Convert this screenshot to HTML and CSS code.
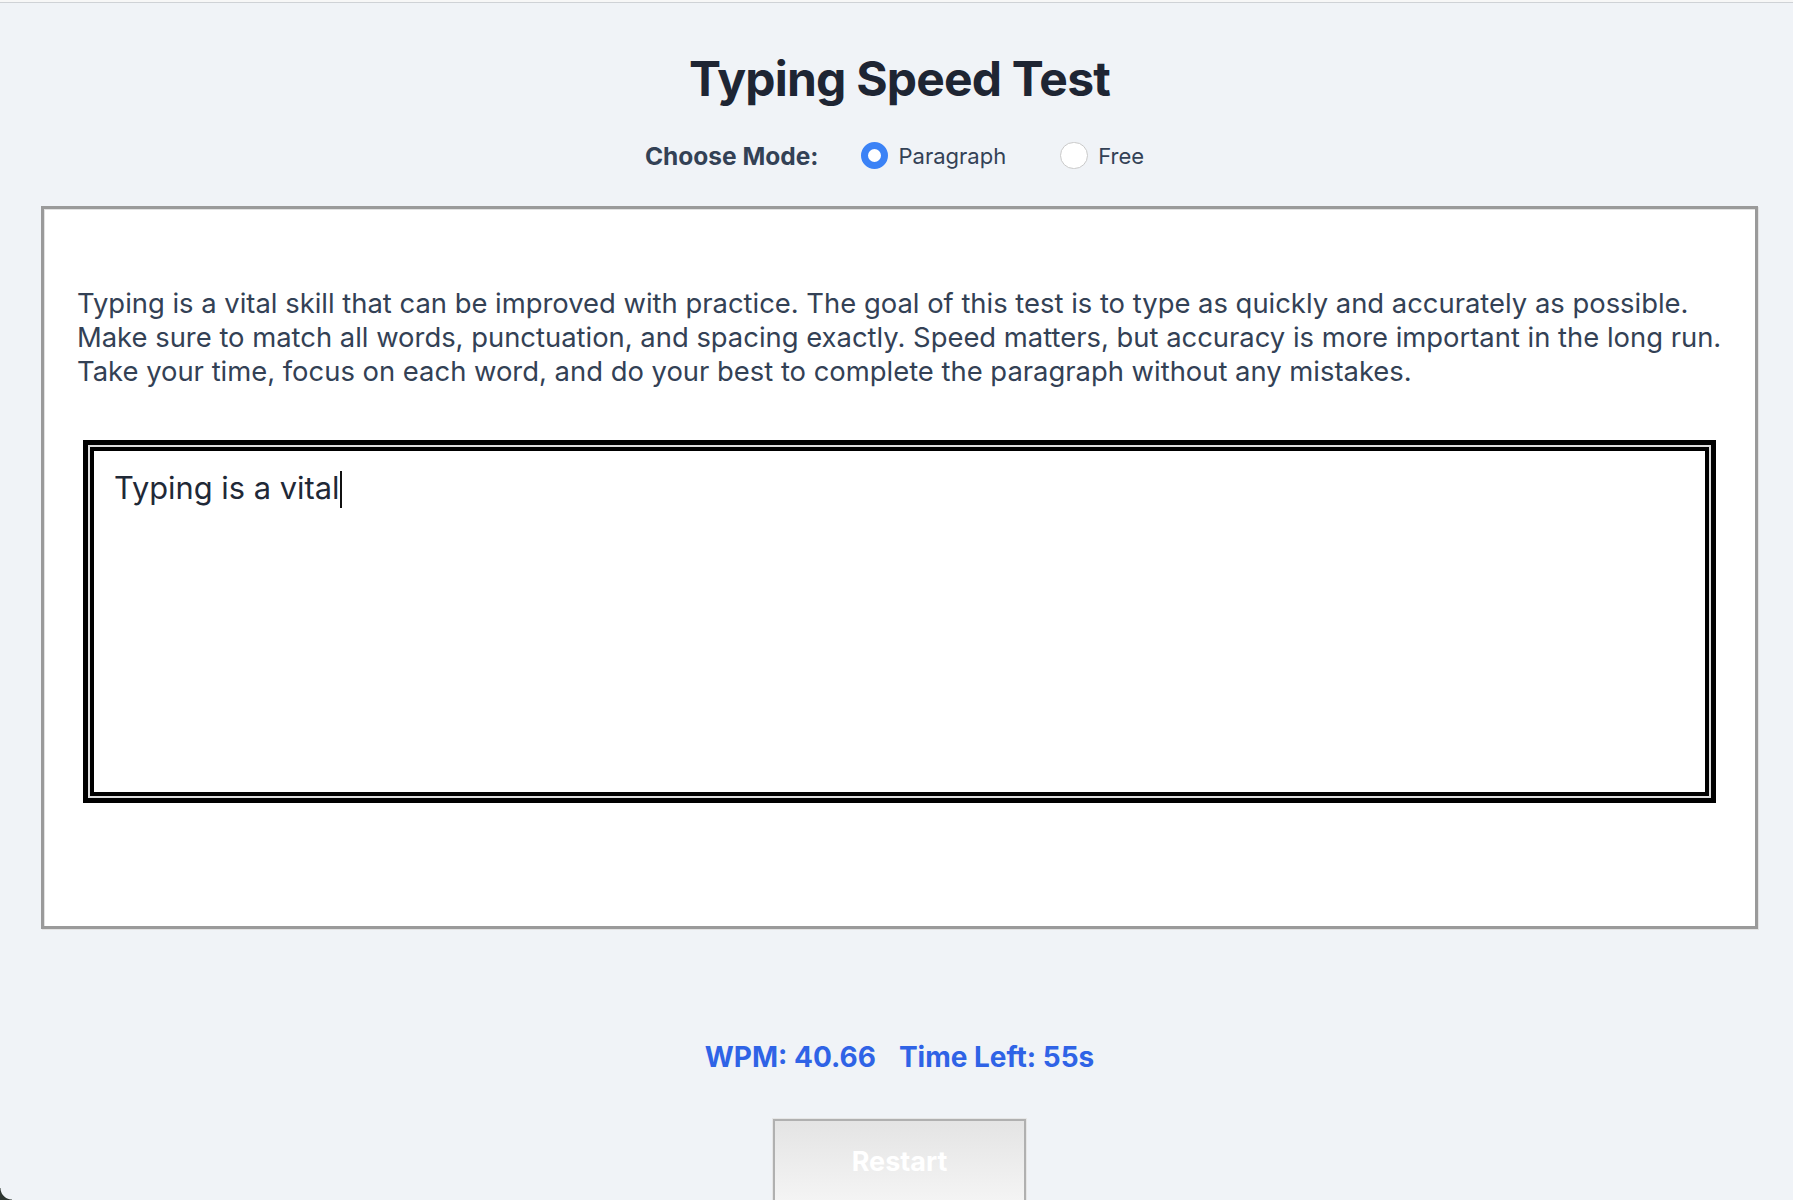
FILE: index.html
```html
<!DOCTYPE html>
<html lang="en">
<head>
<meta charset="utf-8">
<title>Typing Speed Test</title>
<link rel="stylesheet" href="styles.css">
</head>
<body>
<div class="topline"></div>
<main class="app">
  <h1 class="title">Typing Speed Test</h1>
  <div class="mode">
    <span class="mode-label">Choose Mode:</span>
    <label class="opt"><span class="radio radio-on"></span>Paragraph</label>
    <label class="opt"><span class="radio"></span>Free</label>
  </div>
  <section class="card">
    <p class="passage">Typing is a vital skill that can be improved with practice. The goal of this test is to type as quickly and accurately as possible. Make sure to match all words, punctuation, and spacing exactly. Speed matters, but accuracy is more important in the long run. Take your time, focus on each word, and do your best to complete the paragraph without any mistakes.</p>
    <div class="typing">Typing is a vital<span class="caret"></span></div>
  </section>
  <div class="stats"><span>WPM: 40.66</span><span>Time Left: 55s</span></div>
  <button class="restart">Restart</button>
</main>
<div class="corner"></div>
</body>
</html>
```
FILE: styles.css
```css
html, body {
  margin: 0;
  padding: 0;
  background: #f0f3f7;
  height: 100%;
  overflow: hidden;
}
body {
  font-family: Inter, "Liberation Sans", sans-serif;
  color: #334155;
}
.topline {
  height: 2px;
  background: #f7f7f7;
  border-bottom: 1px solid #cfd2d6;
}
.app {
  display: flex;
  flex-direction: column;
  align-items: center;
  padding: 47px 35px 0 41px;
}
.title {
  margin: 0;
  font-size: 48px;
  line-height: 58px;
  font-weight: 700;
  letter-spacing: -0.8px;
  color: #1e2533;
}
.mode {
  margin-top: 34px;
  display: flex;
  align-items: center;
  height: 27px;
  font-size: 22px;
  color: #334155;
}
.mode-label {
  font-weight: 700;
  font-size: 24.5px;
  margin-right: 42px;
}
.opt {
  display: flex;
  align-items: center;
  gap: 10.5px;
  margin-right: 54px;
}
.opt:last-child { margin-right: 10px; }
.radio {
  width: 27.5px;
  height: 27.5px;
  box-sizing: border-box;
  border-radius: 50%;
  background: #fff;
  border: 1px solid #c9c9c9;
}
.radio-on {
  border: 7.5px solid #3b82f6;
  background: #fff;
}
.card {
  margin-top: 37px;
  align-self: stretch;
  background: #fff;
  border: 3px solid #9a9a9a;
  box-shadow: inset 1px 1px 0 #e2e2e2, 1px 1px 0 #e2e2e2;
  padding: 40px 33px 130px;
}
.passage {
  margin: 37px -20px 0 0;
  font-size: 27.4px;
  line-height: 34px;
  color: #334155;
}
.typing {
  margin: 59px 13px 0;
  height: 349px;
  box-sizing: border-box;
  border: 4px solid #000;
  box-shadow: 0 0 0 2px #dcdcdc, 0 0 0 7px #000;
  padding: 18px 20px 20px;
  font-size: 30.8px;
  line-height: 38px;
  color: #1f2937;
}
.caret {
  display: inline-block;
  width: 2px;
  height: 37px;
  background: #111;
  vertical-align: -9px;
  margin-left: 1px;
}
.stats {
  margin-top: 111px;
  display: flex;
  gap: 23px;
  font-size: 28px;
  font-weight: 700;
  color: #2f63e6;
}
.restart {
  margin-top: 45px;
  width: 253px;
  height: 88px;
  box-sizing: border-box;
  border: 2px solid #b0b0b0;
  box-shadow: 0 0 0 1px #e6e6e6;
  background: linear-gradient(#e4e4e4, #f5f5f5);
  color: #fff;
  font-family: Inter, "Liberation Sans", sans-serif;
  font-size: 27px;
  font-weight: 700;
  padding: 0 0 4px;
}
.corner {
  position: fixed;
  left: 0;
  bottom: 0;
  width: 12px;
  height: 12px;
  background: radial-gradient(circle at 12px 0, transparent 11px, #2e3631 12px);
}
```
